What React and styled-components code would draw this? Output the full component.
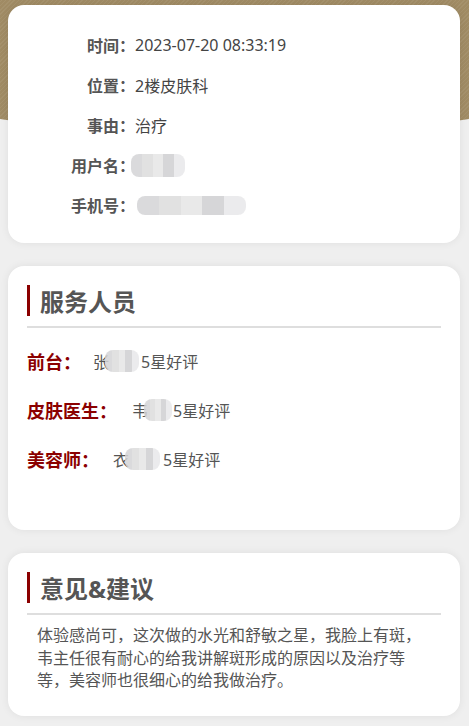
import React from 'react';
import styled, { createGlobalStyle } from 'styled-components';

const GlobalStyle = createGlobalStyle`
  html, body {
    margin: 0;
    padding: 0;
    background: #efefef;
  }
  body {
    font-family: "Noto Sans", "Noto Sans CJK SC", sans-serif;
    -webkit-font-smoothing: antialiased;
  }
`;

const Page = styled.div`
  position: relative;
  min-height: 726px;
  padding: 5px 9px 10px 8px;
  box-sizing: border-box;
  display: flex;
  flex-direction: column;
  gap: 23px;

  &::before {
    content: '';
    position: absolute;
    left: -20px;
    right: -20px;
    top: 0;
    height: 130px;
    border-radius: 0 0 50% 50% / 0 0 18px 18px;
    background-color: #a08b64;
    background-image: repeating-linear-gradient(
      135deg,
      rgba(255, 255, 255, 0.06) 0,
      rgba(255, 255, 255, 0.06) 1px,
      transparent 1px,
      transparent 3px
    );
    z-index: 0;
  }
`;

const Card = styled.section`
  position: relative;
  z-index: 1;
  background: #fff;
  border-radius: 16px;
  box-shadow: 0 0 8px rgba(0, 0, 0, 0.07);
  padding: ${(p) => p.$pad || '19px 19px 20px 19px'};
  min-height: ${(p) => p.$minH || 'auto'};
  box-sizing: border-box;
`;

const InfoGrid = styled.div`
  display: grid;
  grid-template-columns: 127px 1fr;
  grid-auto-rows: 40px;
  align-items: center;
`;

const InfoLabel = styled.div`
  text-align: right;
  font-size: 16px;
  font-weight: 700;
  color: #555;
`;

const InfoValue = styled.div`
  font-size: 16px;
  color: #444;
  display: flex;
  align-items: center;
`;

const Mosaic = styled.span`
  display: inline-block;
  width: ${(p) => p.$w}px;
  height: ${(p) => p.$h}px;
  margin-left: ${(p) => p.$ml || 0}px;
  border-radius: 8px;
  background:
    linear-gradient(90deg,
      #d4d4d6 0 20%, #dcdcdc 20% 40%, #e6e6e6 40% 60%, #d0d0d2 60% 80%, #e8e8ea 80% 100%);
  opacity: 0.85;
  filter: blur(0.6px);
`;

const TitleRow = styled.div`
  display: flex;
  align-items: center;
  height: 31px;
  border-left: 3px solid #8b0000;
  padding-left: 10px;
  font-size: 24px;
  font-weight: 700;
  color: #555;
`;

const Divider = styled.div`
  height: 2px;
  background: #dedede;
  margin-top: 10px;
`;

const StaffList = styled.div`
  display: flex;
  flex-direction: column;
  margin-top: 8px;
`;

const StaffRow = styled.div`
  display: flex;
  align-items: center;
  height: 49px;
`;

const StaffLabel = styled.span`
  font-size: 18px;
  font-weight: 700;
  color: #8b0000;
`;

const StaffValue = styled.span`
  display: flex;
  align-items: center;
  margin-left: ${(p) => p.$indent}px;
  font-size: 16px;
  color: #555;
`;

const Feedback = styled.p`
  margin: 9px 0 0;
  padding: 0 12px 0 10px;
  font-size: 16px;
  line-height: 22.5px;
  color: #555;
`;

const staff = [
  { role: '前台：', first: '张', indent: 12, blur: 34, gapAfter: 2 },
  { role: '皮肤医生：', first: '韦', indent: 15, blur: 28, gapAfter: 1 },
  { role: '美容师：', first: '衣', indent: 14, blur: 35, gapAfter: 3 },
];

export default function App() {
  return (
    <>
      <GlobalStyle />
      <Page>
        <Card $pad="20px 0 18px 0">
          <InfoGrid>
            <InfoLabel>时间：</InfoLabel>
            <InfoValue>2023-07-20 08:33:19</InfoValue>
            <InfoLabel>位置：</InfoLabel>
            <InfoValue>2楼皮肤科</InfoValue>
            <InfoLabel>事由：</InfoLabel>
            <InfoValue>治疗</InfoValue>
            <InfoLabel>用户名：</InfoLabel>
            <InfoValue>
              <Mosaic $w={54} $h={23} $ml={-4} />
            </InfoValue>
            <InfoLabel>手机号：</InfoLabel>
            <InfoValue>
              <Mosaic $w={109} $h={19} $ml={2} />
            </InfoValue>
          </InfoGrid>
        </Card>

        <Card $minH="264px">
          <TitleRow>服务人员</TitleRow>
          <Divider />
          <StaffList>
            {staff.map((s) => (
              <StaffRow key={s.role}>
                <StaffLabel>{s.role}</StaffLabel>
                <StaffValue $indent={s.indent}>
                  {s.first}
                  <Mosaic $w={s.blur} $h={22} $ml={-4} style={{ marginRight: s.gapAfter }} />
                  5星好评
                </StaffValue>
              </StaffRow>
            ))}
          </StaffList>
        </Card>

        <Card $pad="19px 19px 24px 19px">
          <TitleRow>意见&amp;建议</TitleRow>
          <Divider />
          <Feedback>
            体验感尚可，这次做的水光和舒敏之星，我脸上有斑，韦主任很有耐心的给我讲解斑形成的原因以及治疗等等，美容师也很细心的给我做治疗。
          </Feedback>
        </Card>
      </Page>
    </>
  );
}
